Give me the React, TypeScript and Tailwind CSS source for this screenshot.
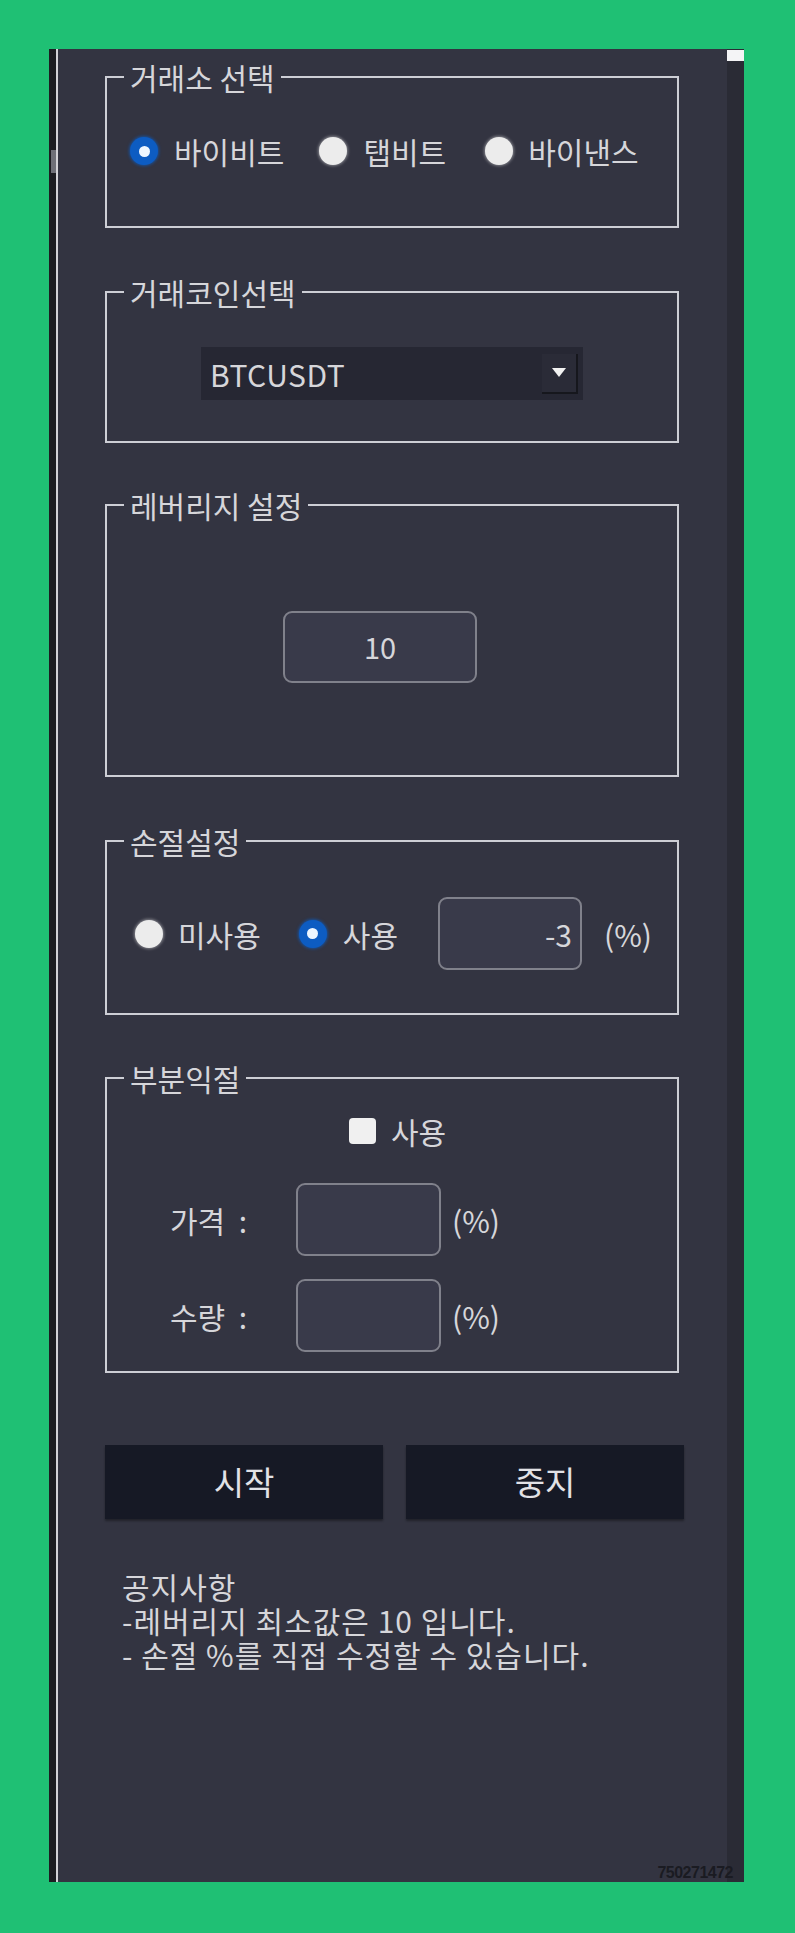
import type { ReactNode } from "react";

interface GroupBoxProps {
  title: string;
  className: string;
  children: ReactNode;
}

const GroupBox = ({ title, className, children }: GroupBoxProps) => {
  return (
    <div className={`ml-[47px] flex w-[574px] flex-col border-2 border-[#cdced5] ${className}`}>
      <span className="-mt-[16px] ml-[17px] w-fit bg-[#333441] px-[6px] text-[30px] leading-[30px]">
        {title}
      </span>
      {children}
    </div>
  );
};

const Radio = ({ checked, className = "" }: { checked?: boolean; className?: string }) => {
  if (checked) {
    return (
      <span
        className={`flex h-[28px] w-[28px] shrink-0 items-center justify-center rounded-full bg-[#0d5cc2] shadow-[0_0_3px_1px_rgba(13,92,194,0.7)] ${className}`}
      >
        <span className="h-[11px] w-[11px] rounded-full bg-[#eef6ff]" />
      </span>
    );
  }
  return (
    <span
      className={`block h-[28px] w-[28px] shrink-0 rounded-full bg-[#ececec] shadow-[0_0_3px_1px_rgba(236,236,236,0.45)] ${className}`}
    />
  );
};

export default function App() {
  return (
    <div className="min-h-[1933px] bg-[#1fc074] pl-[49px] pt-[49px] font-['Noto_Sans_CJK_KR','Noto_Sans',sans-serif] text-[#d6d6da]">
      <div className="relative flex h-[1833px] w-[695px] bg-[#333441]">
        {/* left edge of the window */}
        <div className="flex w-[7px] flex-col bg-[#1c1d22]">
          <div className="mt-[101px] h-[23px] w-[5px] self-end bg-[#6f7078]" />
        </div>
        <div className="w-[2px] bg-[#d3d3d8]" />

        <div className="flex flex-1 flex-col">
          <GroupBox title="거래소 선택" className="mt-[27px] h-[152px]">
            <div className="ml-[23px] mt-[44px] flex h-[30px] items-center text-[30px] leading-[30px]">
              <Radio checked />
              <span className="ml-[16px]">바이비트</span>
              <Radio className="ml-[35px]" />
              <span className="ml-[16px]">탭비트</span>
              <Radio className="ml-[39px]" />
              <span className="ml-[15px]">바이낸스</span>
            </div>
          </GroupBox>

          <GroupBox title="거래코인선택" className="mt-[63px] h-[152px]">
            <div className="ml-[94px] mt-[40px] flex h-[53px] w-[382px] items-center bg-[#262733] pl-[9px] pr-[5px]">
              <span className="flex-1 text-[30px] leading-[30px] tracking-[0.5px]">BTCUSDT</span>
              <span className="flex h-[40px] w-[36px] items-center justify-center border-b-2 border-r-2 border-[#16171d] bg-[#2a2b37]">
                <svg width="14" height="9" viewBox="0 0 14 9">
                  <path d="M0 0 H14 L7 9 Z" fill="#f2f2f2" />
                </svg>
              </span>
            </div>
          </GroupBox>

          <GroupBox title="레버리지 설정" className="mt-[61px] h-[273px]">
            <div className="ml-[176px] mt-[91px] flex h-[72px] w-[194px] items-center justify-center rounded-[9px] border-2 border-[#80818b] bg-[#393a4a] text-[29px]">
              10
            </div>
          </GroupBox>

          <GroupBox title="손절설정" className="mt-[63px] h-[175px]">
            <div className="ml-[28px] mt-[41px] flex h-[73px] items-center text-[30px] leading-[30px]">
              <Radio />
              <span className="ml-[15px]">미사용</span>
              <Radio checked className="ml-[38px]" />
              <span className="ml-[16px]">사용</span>
              <div className="ml-[40px] flex h-[73px] w-[144px] items-center justify-end rounded-[9px] border-2 border-[#80818b] bg-[#393a4a] pr-[8px]">
                -3
              </div>
              <span className="ml-[22px]">(%)</span>
            </div>
          </GroupBox>

          <GroupBox title="부분익절" className="mt-[62px] h-[296px]">
            <div className="ml-[242px] mt-[23px] flex h-[30px] items-center text-[30px] leading-[30px]">
              <span className="h-[26px] w-[27px] rounded-[4px] bg-[#f0f0f0]" />
              <span className="ml-[15px]">사용</span>
            </div>
            <div className="ml-[63px] mt-[37px] flex h-[73px] items-center text-[30px] leading-[30px]">
              <span className="w-[126px]">가격&nbsp;&nbsp;:</span>
              <div className="h-[73px] w-[145px] rounded-[9px] border-2 border-[#80818b] bg-[#393a4a]" />
              <span className="ml-[11px]">(%)</span>
            </div>
            <div className="ml-[63px] mt-[23px] flex h-[73px] items-center text-[30px] leading-[30px]">
              <span className="w-[126px]">수량&nbsp;&nbsp;:</span>
              <div className="h-[73px] w-[145px] rounded-[9px] border-2 border-[#80818b] bg-[#393a4a]" />
              <span className="ml-[11px]">(%)</span>
            </div>
          </GroupBox>

          <div className="ml-[47px] mt-[72px] flex gap-[23px]">
            <button className="flex h-[74px] w-[278px] items-center justify-center bg-[#161925] text-[33px] text-[#e2e2e6] shadow-[0_2px_2px_rgba(0,0,0,0.35)]">
              시작
            </button>
            <button className="flex h-[74px] w-[278px] items-center justify-center bg-[#161925] text-[33px] text-[#e2e2e6] shadow-[0_2px_2px_rgba(0,0,0,0.35)]">
              중지
            </button>
          </div>

          <div className="ml-[64px] mt-[50px] flex flex-col text-[30px] leading-[34px] tracking-[1px]">
            <span>공지사항</span>
            <span>-레버리지 최소값은 10 입니다.</span>
            <span>- 손절 %를 직접 수정할 수 있습니다.</span>
          </div>
        </div>

        {/* scrollbar */}
        <div className="flex w-[17px] flex-col bg-[#2a2b35]">
          <div className="mt-[1px] h-[11px] bg-[#f4f4f6]" />
        </div>

        <span className="absolute bottom-[1px] right-[11px] font-['Liberation_Sans',sans-serif] text-[16px] font-bold leading-[16px] tracking-[-0.5px] text-[#1a1b22]">
          750271472
        </span>
      </div>
    </div>
  );
}
